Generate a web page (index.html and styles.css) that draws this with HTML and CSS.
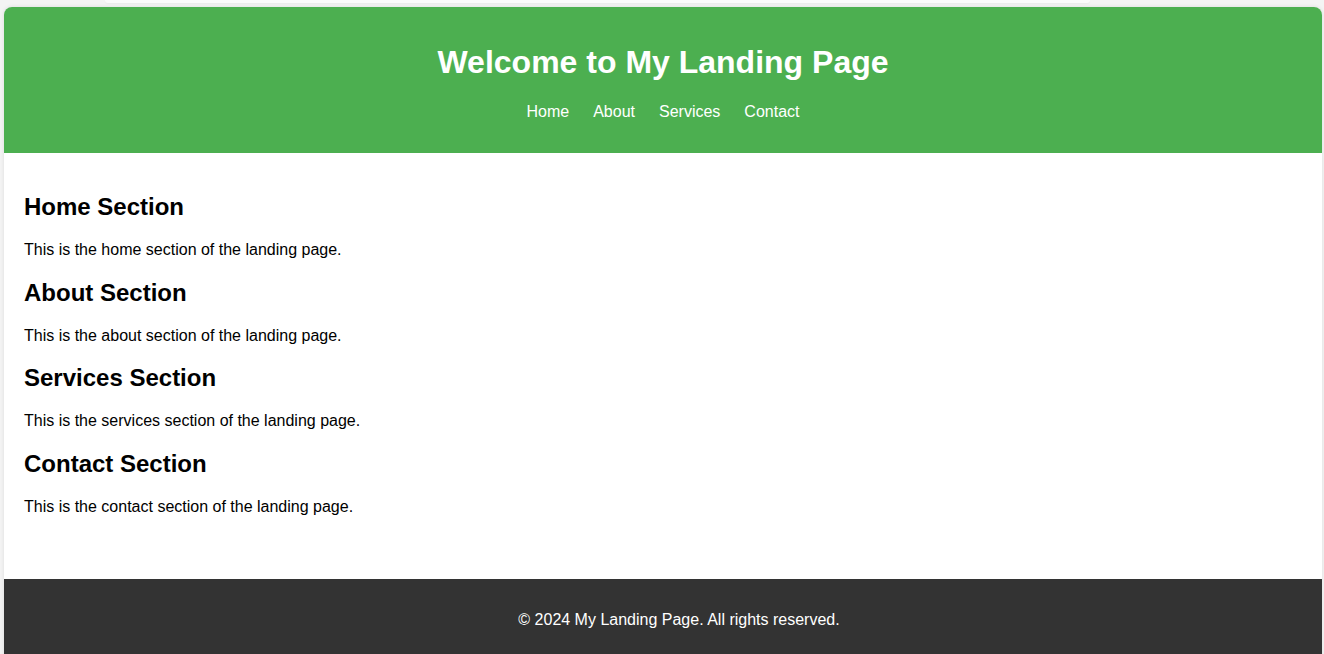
FILE: index.html
```html
<!DOCTYPE html>
<html lang="en">
<head>
<meta charset="UTF-8">
<title>My Landing Page</title>
<link rel="stylesheet" href="styles.css">
</head>
<body>
<div class="top-strip"></div>
<div class="container">
  <header class="site-header">
    <h1>Welcome to My Landing Page</h1>
    <nav>
      <ul class="nav-list">
        <li><a href="#home">Home</a></li>
        <li><a href="#about">About</a></li>
        <li><a href="#services">Services</a></li>
        <li><a href="#contact">Contact</a></li>
      </ul>
    </nav>
  </header>
  <main class="content">
    <section id="home">
      <h2>Home Section</h2>
      <p>This is the home section of the landing page.</p>
    </section>
    <section id="about">
      <h2>About Section</h2>
      <p>This is the about section of the landing page.</p>
    </section>
    <section id="services">
      <h2>Services Section</h2>
      <p>This is the services section of the landing page.</p>
    </section>
    <section id="contact">
      <h2>Contact Section</h2>
      <p>This is the contact section of the landing page.</p>
    </section>
  </main>
  <footer class="site-footer">
    <p>&copy; 2024 My Landing Page. All rights reserved.</p>
  </footer>
</div>
</body>
</html>
```

FILE: styles.css
```css
html, body {
  margin: 0;
  padding: 0;
}

body {
  background: #f4f4f4;
  font-family: "Liberation Sans", Arial, sans-serif;
  color: #000;
  overflow: hidden;
}

.top-strip {
  height: 3px;
  width: 985px;
  margin-left: 105px;
  background: #fbfbfb;
  border-radius: 0 0 10px 10px;
  box-shadow: 0 1px 2px rgba(0, 0, 0, 0.04);
}

.container {
  margin: 4px 2px 0 4px;
  background: #fff;
  border-radius: 8px 8px 0 0;
  box-shadow: 0 0 4px rgba(0, 0, 0, 0.1);
  overflow: hidden;
}

.site-header {
  background: #4caf50;
  color: #fff;
  text-align: center;
  padding: 16px 20px;
}

.site-header h1 {
  font-size: 32px;
  margin: 21.44px 0;
}

.nav-list {
  list-style: none;
  margin: 16px 0;
  padding: 0;
  display: flex;
  justify-content: center;
  gap: 24px;
}

.nav-list a {
  color: #fff;
  text-decoration: none;
  font-size: 16px;
}

.content {
  padding: 20px 20px 47px;
}

.content h2 {
  font-size: 24px;
  margin: 19.92px 0;
}

.content p {
  font-size: 16px;
  margin: 16px 0;
}

.site-footer {
  background: #333;
  color: #fff;
  text-align: center;
  padding: 16px 0 15px 32px;
}

.site-footer p {
  margin: 16px 0;
  font-size: 16px;
}
```
